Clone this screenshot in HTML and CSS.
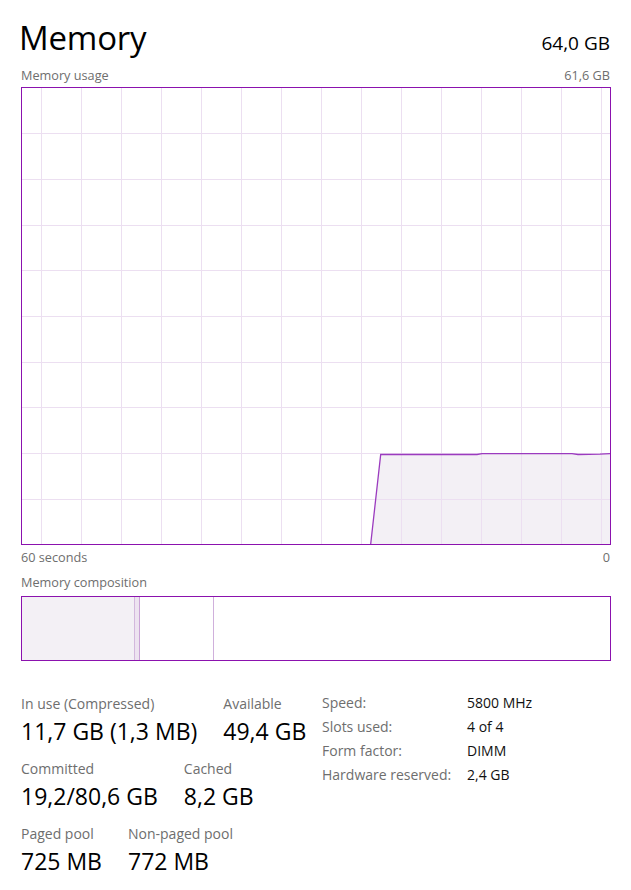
FILE: index.html
```html
<!DOCTYPE html>
<html lang="en">
<head>
<meta charset="utf-8">
<title>Memory</title>
<link rel="stylesheet" href="styles.css">
</head>
<body>
<main class="page">
  <header class="header">
    <h1 class="title">Memory</h1>
    <div class="total">64,0 GB</div>
  </header>

  <div class="caption-row caption-top">
    <span>Memory usage</span>
    <span>61,6 GB</span>
  </div>

  <div class="graph">
    <svg class="graph-svg" width="588" height="456" viewBox="0 0 588 456" xmlns="http://www.w3.org/2000/svg">
      <polygon class="fill" points="348.7,456 358.7,366.5 455,366.5 460,365.7 550,365.7 556,366.5 578,366.2 588,365.7 588,456"/>
      <g class="grid">
        <line x1="19.5" y1="0" x2="19.5" y2="456"/>
        <line x1="59.5" y1="0" x2="59.5" y2="456"/>
        <line x1="99.5" y1="0" x2="99.5" y2="456"/>
        <line x1="139.5" y1="0" x2="139.5" y2="456"/>
        <line x1="179.5" y1="0" x2="179.5" y2="456"/>
        <line x1="219.5" y1="0" x2="219.5" y2="456"/>
        <line x1="259.5" y1="0" x2="259.5" y2="456"/>
        <line x1="299.5" y1="0" x2="299.5" y2="456"/>
        <line x1="339.5" y1="0" x2="339.5" y2="456"/>
        <line x1="379.5" y1="0" x2="379.5" y2="456"/>
        <line x1="419.5" y1="0" x2="419.5" y2="456"/>
        <line x1="459.5" y1="0" x2="459.5" y2="456"/>
        <line x1="499.5" y1="0" x2="499.5" y2="456"/>
        <line x1="539.5" y1="0" x2="539.5" y2="456"/>
        <line x1="579.5" y1="0" x2="579.5" y2="456"/>
        <line x1="0" y1="45.5" x2="588" y2="45.5"/>
        <line x1="0" y1="91.5" x2="588" y2="91.5"/>
        <line x1="0" y1="137.5" x2="588" y2="137.5"/>
        <line x1="0" y1="182.5" x2="588" y2="182.5"/>
        <line x1="0" y1="228.5" x2="588" y2="228.5"/>
        <line x1="0" y1="274.5" x2="588" y2="274.5"/>
        <line x1="0" y1="319.5" x2="588" y2="319.5"/>
        <line x1="0" y1="365.5" x2="588" y2="365.5"/>
        <line x1="0" y1="411.5" x2="588" y2="411.5"/>
      </g>
      <polyline class="line" points="348.7,456 358.7,366.5 455,366.5 460,365.7 550,365.7 556,366.5 578,366.2 588,365.7"/>
    </svg>
  </div>

  <div class="caption-row caption-axis">
    <span>60 seconds</span>
    <span>0</span>
  </div>

  <div class="caption-row caption-comp">
    <span>Memory composition</span>
  </div>

  <div class="composition">
    <div class="seg seg-inuse"></div>
    <div class="seg seg-modified"></div>
    <div class="seg seg-standby"></div>
    <div class="seg seg-free"></div>
  </div>

  <section class="stats">
    <div class="stats-left">
      <div class="stat-row">
        <div class="stat">
          <div class="stat-label">In use (Compressed)</div>
          <div class="stat-value">11,7 GB (1,3 MB)</div>
        </div>
        <div class="stat">
          <div class="stat-label">Available</div>
          <div class="stat-value">49,4 GB</div>
        </div>
      </div>
      <div class="stat-row">
        <div class="stat">
          <div class="stat-label">Committed</div>
          <div class="stat-value">19,2/80,6 GB</div>
        </div>
        <div class="stat">
          <div class="stat-label">Cached</div>
          <div class="stat-value">8,2 GB</div>
        </div>
      </div>
      <div class="stat-row">
        <div class="stat">
          <div class="stat-label">Paged pool</div>
          <div class="stat-value">725 MB</div>
        </div>
        <div class="stat">
          <div class="stat-label">Non-paged pool</div>
          <div class="stat-value">772 MB</div>
        </div>
      </div>
    </div>
    <dl class="specs">
      <dt>Speed:</dt><dd>5800 MHz</dd>
      <dt>Slots used:</dt><dd>4 of 4</dd>
      <dt>Form factor:</dt><dd>DIMM</dd>
      <dt>Hardware reserved:</dt><dd>2,4 GB</dd>
    </dl>
  </section>
</main>
</body>
</html>
```

FILE: styles.css
```css
* {
  box-sizing: border-box;
}

html, body {
  margin: 0;
  padding: 0;
  background: #ffffff;
}

body {
  font-family: "Segoe UI", "Open Sans", "Noto Sans", sans-serif;
  color: #000000;
}

.page {
  width: 631px;
  padding: 18px 21px 0 21px;
}

.header {
  display: flex;
  justify-content: space-between;
  align-items: baseline;
  height: 40px;
}

.title {
  margin: 0 0 0 -2px;
  font-size: 33px;
  font-weight: 400;
  line-height: 40px;
  letter-spacing: -0.2px;
}

.total {
  font-size: 19px;
  line-height: 40px;
}

.caption-row {
  display: flex;
  justify-content: space-between;
  font-size: 12.7px;
  line-height: 16px;
  color: #6e6e6e;
}

.caption-top {
  margin-top: 9px;
}

.graph {
  margin-top: 4px;
  width: 590px;
  height: 458px;
  border: 1px solid #8b12ae;
  background: #ffffff;
}

.graph-svg {
  display: block;
}

.grid line {
  stroke: #ecdff1;
  stroke-width: 1;
}

.fill {
  fill: #f3f0f5;
}

.line {
  fill: none;
  stroke: #9b3bbf;
  stroke-width: 1.3;
}

.caption-axis {
  margin-top: 4px;
}

.caption-comp {
  margin-top: 9px;
}

.composition {
  margin-top: 6px;
  width: 590px;
  height: 65px;
  border: 1px solid #8b12ae;
  display: flex;
}

.seg {
  height: 100%;
}

.seg-inuse {
  width: 113px;
  background: #f3f0f5;
  border-right: 1px solid #d3b8dd;
}

.seg-modified {
  width: 5px;
  background: #ede3f0;
  border-right: 1px solid #c9a3d6;
}

.seg-standby {
  width: 74px;
  border-right: 1px solid #d0b0dc;
}

.seg-free {
  flex: 1;
}

.stats {
  display: flex;
  align-items: flex-start;
  margin-top: 30px;
}

.stats-left {
  width: 301px;
  padding-top: 3px;
}

.stat-row {
  display: flex;
  gap: 26px;
  margin-bottom: 10px;
}

.stat-label {
  font-size: 14px;
  line-height: 20px;
  color: #6e6e6e;
}

.stat-value {
  font-size: 23px;
  line-height: 35px;
  color: #000000;
}

.specs {
  margin: 0;
  display: grid;
  grid-template-columns: 145px auto;
  align-content: start;
  font-size: 14px;
  line-height: 24px;
}

.specs dt {
  color: #6e6e6e;
}

.specs dd {
  margin: 0;
  color: #111111;
}
```
